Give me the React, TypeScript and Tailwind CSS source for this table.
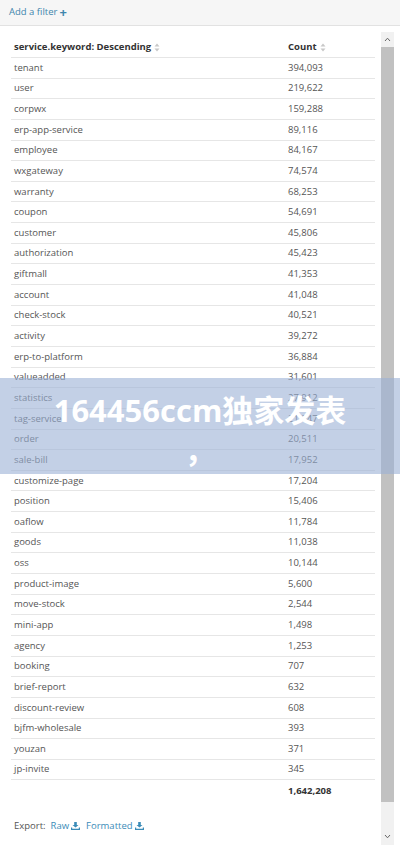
import React from 'react';

const rows: [string, string][] = [
  ['tenant', '394,093'],
  ['user', '219,622'],
  ['corpwx', '159,288'],
  ['erp-app-service', '89,116'],
  ['employee', '84,167'],
  ['wxgateway', '74,574'],
  ['warranty', '68,253'],
  ['coupon', '54,691'],
  ['customer', '45,806'],
  ['authorization', '45,423'],
  ['giftmall', '41,353'],
  ['account', '41,048'],
  ['check-stock', '40,521'],
  ['activity', '39,272'],
  ['erp-to-platform', '36,884'],
  ['valueadded', '31,601'],
  ['statistics', '27,912'],
  ['tag-service', '21,947'],
  ['order', '20,511'],
  ['sale-bill', '17,952'],
  ['customize-page', '17,204'],
  ['position', '15,406'],
  ['oaflow', '11,784'],
  ['goods', '11,038'],
  ['oss', '10,144'],
  ['product-image', '5,600'],
  ['move-stock', '2,544'],
  ['mini-app', '1,498'],
  ['agency', '1,253'],
  ['booking', '707'],
  ['brief-report', '632'],
  ['discount-review', '608'],
  ['bjfm-wholesale', '393'],
  ['youzan', '371'],
  ['jp-invite', '345'],
];

const SortIcon = () => (
  <svg width="6" height="9" viewBox="0 0 6 9" className="ml-[3px] inline-block">
    <path d="M3 0.5 L5.5 3.5 H0.5 Z" fill="#c8c8c8" />
    <path d="M3 8.5 L5.5 5.5 H0.5 Z" fill="#c8c8c8" />
  </svg>
);

const Download = () => (
  <svg width="9" height="8" viewBox="0 0 9 8" className="ml-[2px] inline-block">
    <path d="M3.2 0 H5.8 V3 H7.5 L4.5 5.6 L1.5 3 H3.2 Z" fill="#3b8cb8" />
    <path d="M0 5.5 H1.2 V6.8 H7.8 V5.5 H9 V8 H0 Z" fill="#3b8cb8" />
  </svg>
);

const Chevron = ({ up }: { up?: boolean }) => (
  <svg width="7" height="5" viewBox="0 0 7 5">
    <path
      d={up ? 'M1 4 L3.5 1.2 L6 4' : 'M1 1 L3.5 3.8 L6 1'}
      stroke="#666"
      strokeWidth="1"
      fill="none"
    />
  </svg>
);

export default function App() {
  return (
    <div
      className="relative w-[400px] h-[853px] overflow-hidden bg-white text-[#555]"
      style={{ fontFamily: '"Open Sans", "Noto Sans", sans-serif' }}
    >
      <div className="h-[26px] bg-[#f6f6f6] border-b border-[#e2e2e2] flex items-center pl-[9px] pb-[1px]">
        <span className="text-[9.5px] text-[#3f86ad]">Add a filter</span>
        <span className="ml-[2px] text-[13px] leading-none font-bold text-[#3f86ad]">+</span>
      </div>

      <div className="flex">
        <div className="flex-1 pl-[11px] pr-[6px] pt-[11px]">
          <div className="flex h-[21px] items-center border-b border-[#e6e6e6] text-[9.5px] font-bold text-[#333]">
            <div className="w-[277px] pl-[3px] flex items-center">
              service.keyword: Descending
              <SortIcon />
            </div>
            <div className="flex-1 flex items-center">
              Count
              <SortIcon />
            </div>
          </div>
          {rows.map(([name, count]) => (
            <div
              key={name}
              className="flex h-[20.65px] items-center border-b border-[#e6e6e6] text-[9.5px]"
            >
              <div className="w-[277px] pl-[3px]">{name}</div>
              <div className="flex-1">{count}</div>
            </div>
          ))}
          <div className="flex h-[20.65px] items-center text-[9.5px] font-bold text-[#333]">
            <div className="w-[277px]" />
            <div className="flex-1">1,642,208</div>
          </div>
          <div className="mt-[18px] flex items-center pl-[3px] text-[9.5px]">
            <span>Export:</span>
            <span className="ml-[5px] text-[#3b8cb8] flex items-center">
              Raw
              <Download />
            </span>
            <span className="ml-[6px] text-[#3b8cb8] flex items-center">
              Formatted
              <Download />
            </span>
          </div>
        </div>

        <div className="w-[13px] mr-[6px] mt-[6px] h-[813px] flex flex-col bg-[#f1f1f1]">
          <div className="h-[15px] flex items-center justify-center">
            <Chevron up />
          </div>
          <div className="h-[755px] bg-[#c1c1c1]" />
          <div className="flex-1 flex items-end justify-center pb-[6px]">
            <Chevron />
          </div>
        </div>
      </div>

      <div className="absolute left-0 top-[378px] w-[400px] h-[96px] bg-[rgba(155,177,214,0.6)] flex flex-col items-center pt-[12px]">
        <div
          className="text-center text-[31px] leading-[40px] font-bold text-white"
          style={{ fontFamily: '"Open Sans", "Noto Sans CJK SC", sans-serif' }}
        >
          164456ccm独家发表
          <br />
          <span className="inline-block">，</span>
        </div>
      </div>
    </div>
  );
}
